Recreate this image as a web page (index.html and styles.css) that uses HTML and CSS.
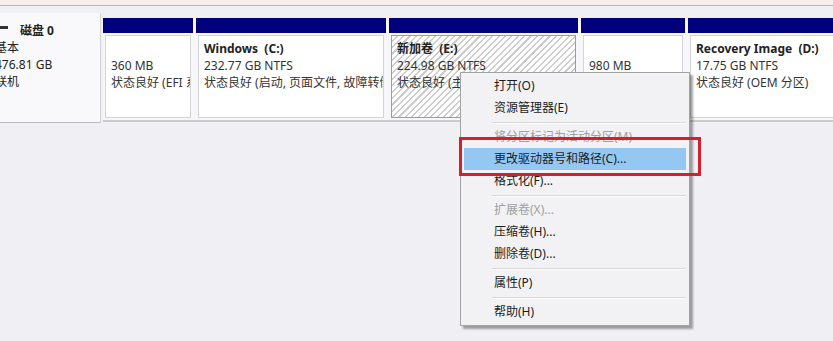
FILE: index.html
```html
<!DOCTYPE html>
<html lang="zh-CN">
<head>
<meta charset="utf-8">
<title>磁盘管理</title>
<link rel="stylesheet" href="styles.css">
</head>
<body>
<div class="topstrip"></div>
<div class="disk">
  <div class="label">
    <div class="ltext">
      <div class="lrow"><span class="dicon"></span><b class="dname">磁盘 0</b></div>
      <div>基本</div>
      <div>476.81 GB</div>
      <div>联机</div>
    </div>
  </div>
  <div class="parts">
    <div class="part p1">
      <div class="hdr"></div>
      <div class="body">
        <div class="ln">&nbsp;</div>
        <div class="ln">360 MB</div>
        <div class="ln">状态良好 (EFI 系统分区)</div>
      </div>
    </div>
    <div class="part p2">
      <div class="hdr"></div>
      <div class="body">
        <div class="ln name">Windows&nbsp;&nbsp;(C:)</div>
        <div class="ln">232.77 GB NTFS</div>
        <div class="ln">状态良好 (启动, 页面文件, 故障转储, 主分区)</div>
      </div>
    </div>
    <div class="part p3">
      <div class="hdr"></div>
      <div class="body sel">
        <div class="ln name">新加卷&nbsp;&nbsp;(E:)</div>
        <div class="ln">224.98 GB NTFS</div>
        <div class="ln">状态良好 (主分区)</div>
      </div>
    </div>
    <div class="part p4">
      <div class="hdr"></div>
      <div class="body">
        <div class="ln">&nbsp;</div>
        <div class="ln">980 MB</div>
        <div class="ln">状态良好 (恢复分区)</div>
      </div>
    </div>
    <div class="part p5">
      <div class="hdr"></div>
      <div class="body">
        <div class="ln name">Recovery Image&nbsp;&nbsp;(D:)</div>
        <div class="ln">17.75 GB NTFS</div>
        <div class="ln">状态良好 (OEM 分区)</div>
      </div>
    </div>
  </div>
</div>

<div class="menu">
  <div class="item">打开(O)</div>
  <div class="item">资源管理器(E)</div>
  <div class="sep"></div>
  <div class="item dis">将分区标记为活动分区(M)</div>
  <div class="item hl">更改驱动器号和路径(C)...</div>
  <div class="item">格式化(F)...</div>
  <div class="sep"></div>
  <div class="item dis">扩展卷(X)...</div>
  <div class="item">压缩卷(H)...</div>
  <div class="item">删除卷(D)...</div>
  <div class="sep"></div>
  <div class="item">属性(P)</div>
  <div class="sep"></div>
  <div class="item">帮助(H)</div>
</div>
<div class="redbox"></div>
</body>
</html>
```

FILE: styles.css
```css
html, body {
  margin: 0;
  padding: 0;
}
body {
  width: 833px;
  height: 341px;
  overflow: hidden;
  position: relative;
  background: #f0eff3;
  font-family: "Noto Sans", "Noto Sans CJK SC", sans-serif;
  font-size: 12px;
  line-height: 17px;
  color: #333;
}
.topstrip {
  height: 5px;
  background: #f6efeb;
  border-bottom: 1px solid #bdb8b8;
}
.disk {
  display: flex;
  align-items: flex-start;
  margin-top: 7px;
}
.label {
  width: 100px;
  height: 109px;
  background: #f9f9fb;
  border-right: 1px solid #d3d3d8;
  border-bottom: 1px solid #b9b9be;
  overflow: hidden;
  flex: none;
}
.ltext {
  margin-left: -5px;
  padding-top: 9px;
  color: #222;
}
.lrow {
  display: flex;
  align-items: center;
}
.dicon {
  width: 13px;
  height: 3px;
  background: #333;
  margin-right: 12px;
  margin-top: -7px;
}
.dname {
  font-weight: 700;
}
.parts {
  display: flex;
  column-gap: 3px;
  margin-top: 5px;
  margin-left: 2px;
  padding-bottom: 2px;
  border-bottom: 2px solid #c9c9ce;
  background: #f7f7f9;
  flex: 1;
  overflow: hidden;
}
.part {
  display: flex;
  flex-direction: column;
  flex: none;
}
.p1 { width: 90px; }
.p2 { width: 190px; }
.p3 { width: 189px; }
.p4 { width: 104px; }
.p5 { width: 160px; }
.hdr {
  height: 15px;
  background: #00007d;
}
.body {
  margin: 2px 2px 0 2px;
  height: 77px;
  padding: 4px 5px 0 5px;
  border: 1px solid #d4d4d8;
  background: #ffffff;
  overflow: hidden;
  white-space: nowrap;
}
.body.sel {
  border-color: #9c9c9c;
  background: repeating-linear-gradient(135deg, #ffffff 0px, #ffffff 3px, #cdcdcd 3px, #cdcdcd 4.5px);
}
.ln {
  height: 17px;
}
.name {
  font-weight: 700;
  color: #222;
}

.menu {
  position: absolute;
  left: 460px;
  top: 72px;
  width: 224px;
  padding: 2px;
  background: #f2f1f3;
  border: 1px solid #a3a3a6;
  box-shadow: 3px 3px 2px rgba(0, 0, 0, 0.35);
  color: #1c1c1c;
}
.item {
  height: 22px;
  line-height: 22px;
  margin: 0 1px;
  padding-left: 30px;
  white-space: nowrap;
}
.item.dis {
  color: #a0a0a0;
}
.item.hl {
  background: #94c8f3;
}
.sep {
  height: 7px;
  margin-left: 29px;
  margin-right: 1px;
  position: relative;
}
.sep::after {
  content: "";
  position: absolute;
  left: 0;
  right: 0;
  top: 3px;
  height: 1px;
  background: #d6d6d8;
  box-shadow: 0 1px 0 #ffffff;
}
.redbox {
  position: absolute;
  left: 459px;
  top: 137px;
  width: 236px;
  height: 33px;
  border: 3px solid #d2202e;
}
```
